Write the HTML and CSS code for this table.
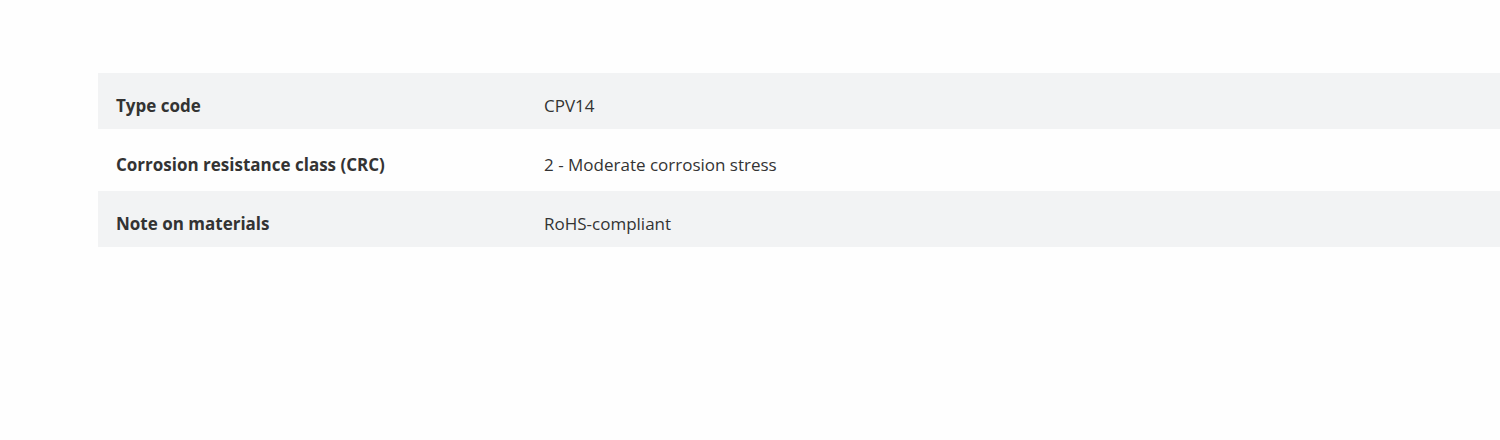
FILE: index.html
```html
<!DOCTYPE html>
<html>
<head>
<meta charset="utf-8">
<link rel="stylesheet" href="styles.css">
</head>
<body>
<div class="page">
  <div class="specs">
    <div class="row shaded">
      <div class="label">Type code</div>
      <div class="value">CPV14</div>
    </div>
    <div class="row tall">
      <div class="label">Corrosion resistance class (CRC)</div>
      <div class="value">2 - Moderate corrosion stress</div>
    </div>
    <div class="row shaded">
      <div class="label">Note on materials</div>
      <div class="value">RoHS-compliant</div>
    </div>
  </div>
</div>
</body>
</html>
```

FILE: styles.css
```css
html, body {
  margin: 0;
  padding: 0;
  background: #fefefe;
}
body {
  font-family: "Open Sans", "Noto Sans", sans-serif;
  color: #333333;
  font-size: 17px;
  line-height: 24px;
}
.page {
  padding: 73px 0 0 98px;
}
.specs {
  display: flex;
  flex-direction: column;
}
.row {
  display: grid;
  grid-template-columns: 428px 1fr;
  align-items: center;
  height: 56px;
  padding: 0 18px;
  box-sizing: border-box;
}
.row.tall {
  height: 62px;
}
.row.shaded {
  background: #f2f3f4;
}
.label {
  font-weight: 700;
  padding-top: 10px;
}
.value {
  padding-top: 10px;
}
```
